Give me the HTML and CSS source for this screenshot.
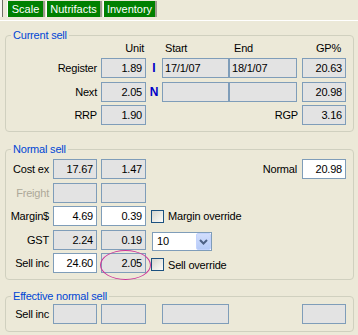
FILE: index.html
```html
<!DOCTYPE html>
<html lang="en">
<head>
<meta charset="utf-8">
<title>Sell prices</title>
<link rel="stylesheet" href="styles.css">
</head>
<body>
<div class="tabbar">
  <span class="tab-edge"></span>
  <span class="tab tab-scale">Scale</span>
  <span class="tab tab-nutri">Nutrifacts</span>
  <span class="tab tab-inv">Inventory</span>
</div>

<fieldset class="group group-current">
  <legend>Current sell</legend>
  <div class="form-grid grid-current">
    <span class="hdr c4 num-hdr">Unit</span>
    <span class="hdr c6 start-hdr">Start</span>
    <span class="hdr end-hdr">End</span>
    <span class="hdr c9 gp-hdr">GP%</span>

    <span class="lbl lbl-wide">Register</span>
    <span class="fld ro num">1.89</span>
    <span class="mark">I</span>
    <span class="fld ro date">17/1/07</span>
    <span class="fld ro date">18/1/07</span>
    <span class="fld ro num c9">20.63</span>

    <span class="lbl lbl-wide">Next</span>
    <span class="fld ro num">2.05</span>
    <span class="mark">N</span>
    <span class="fld ro date"></span>
    <span class="fld ro date"></span>
    <span class="fld ro num c9">20.98</span>

    <span class="lbl lbl-wide">RRP</span>
    <span class="fld ro num">1.90</span>
    <span class="lbl rgp">RGP</span>
    <span class="fld ro num c9">3.16</span>
  </div>
</fieldset>

<fieldset class="group group-normal">
  <legend>Normal sell</legend>
  <div class="form-grid">
    <span class="lbl">Cost ex</span>
    <span class="fld ro num">17.67</span>
    <span class="fld ro num c4">1.47</span>
    <span class="lbl mid normal-lbl">Normal</span>
    <span class="fld num c9">20.98</span>

    <span class="lbl disabled">Freight</span>
    <span class="fld ro"></span>
    <span class="fld ro c4"></span>

    <span class="lbl">Margin$</span>
    <span class="fld num">4.69</span>
    <span class="fld num c4">0.39</span>
    <label class="check mid"><span class="box"></span>Margin override</label>

    <span class="lbl">GST</span>
    <span class="fld ro num">2.24</span>
    <span class="fld ro num c4">0.19</span>
    <div class="mid combo-cell">
      <div class="combo">
        <span class="combo-val">10</span>
        <span class="combo-btn"><svg width="13" height="15" viewBox="0 0 13 15"><path d="M3 6 L6.5 9.5 L10 6" fill="none" stroke="#4d6185" stroke-width="2"/></svg></span>
      </div>
    </div>

    <span class="lbl">Sell inc</span>
    <span class="fld num">24.60</span>
    <span class="c4 ring-cell"><span class="fld ro num">2.05</span><span class="ring"></span></span>
    <label class="check mid check-low"><span class="box"></span>Sell override</label>
  </div>
</fieldset>

<fieldset class="group group-effective">
  <legend>Effective normal sell</legend>
  <div class="form-grid">
    <span class="lbl">Sell inc</span>
    <span class="fld ro"></span>
    <span class="fld ro c4"></span>
    <span class="fld ro c6"></span>
    <span class="fld ro c9"></span>
  </div>
</fieldset>
</body>
</html>
```

FILE: styles.css
```css
html, body {
  margin: 0;
  padding: 0;
  background: #ece9d8;
}
body {
  width: 358px;
  height: 335px;
  overflow: hidden;
  font-family: "Liberation Sans", Arial, sans-serif;
  font-size: 11px;
  letter-spacing: -0.2px;
  color: #000;
}

/* tab strip */
.tabbar {
  display: flex;
  align-items: flex-start;
  height: 21px;
  padding-top: 1px;
  box-sizing: border-box;
  border-bottom: 1px solid #fff;
}
.tab-edge {
  width: 2px;
  height: 17px;
  background: #f7f6f0;
  border-right: 1px solid #716f64;
  margin-right: 4px;
  margin-top: -1px;
}
.tab {
  height: 16px;
  line-height: 16px;
  background: #008000;
  color: #fff;
  text-align: center;
  letter-spacing: 0;
  border-left: 1px solid #fff;
  border-right: 2px solid #9d9b8f;
  margin-right: 1px;
}
.tab-scale { width: 35px; }
.tab-nutri { width: 53px; }
.tab-inv { width: 51px; }

/* group boxes */
.group {
  margin: 0 4px 0 5px;
  padding: 0 0 6px;
  border: 1px solid #d0d0bf;
  border-radius: 4px;
  min-width: 0;
}
.group legend {
  margin-left: 5px;
  padding: 0 2px;
  line-height: 14px;
  color: #0046d5;
}
.group-current { margin-top: 7px; }
.group-normal { margin-top: 10px; padding-top: 3px; }
.group-effective { margin-top: 9px; padding-top: 1px; padding-bottom: 7px; }

.form-grid {
  display: grid;
  grid-template-columns: 47px 44px 4px 45px 16px 67px 68px 5px 44px;
  grid-auto-rows: 20px;
  row-gap: 3.5px;
}
.grid-current {
  grid-template-rows: 12.5px;
}

.hdr {
  line-height: 12.5px;
  white-space: nowrap;
}
.num-hdr { text-align: right; padding-right: 2px; }
.start-hdr { padding-left: 3px; }
.end-hdr { padding-left: 5px; }
.gp-hdr { text-align: right; padding-right: 5px; }

.lbl {
  grid-column: 1;
  line-height: 20px;
  text-align: right;
  padding-right: 4px;
  white-space: nowrap;
}
.normal-lbl { padding-right: 5px; }
.disabled { color: #aca899; }

.mark {
  line-height: 20px;
  text-align: center;
  font-weight: bold;
  color: #0000c8;
  font-size: 12px;
  letter-spacing: 0;
}

.fld {
  display: block;
  height: 20px;
  box-sizing: border-box;
  border: 1px solid #7f9db9;
  background: #fff;
  line-height: 18px;
  padding: 0 3px;
  white-space: nowrap;
  overflow: hidden;
}
.fld.ro { background: #e3e3e3; }
.num { text-align: right; }
.date { padding-left: 2px; }

/* checkboxes */
.check {
  display: flex;
  align-items: center;
  gap: 4px;
  padding-left: 5px;
  white-space: nowrap;
}
.check-low { padding-top: 3px; }
.box {
  width: 13px;
  height: 13px;
  box-sizing: border-box;
  border: 1px solid #1c5180;
  background: linear-gradient(135deg, #d6d5ce 0%, #ecebe6 55%, #fbfbf9 100%);
}

/* combo box */
.combo {
  display: flex;
  width: 60px;
  height: 19px;
  box-sizing: border-box;
  margin: 2px 0 0 6px;
  border: 1px solid #7f9db9;
  background: #fff;
}
.combo-val {
  flex: 1;
  padding-left: 4px;
  line-height: 17px;
}
.combo-btn {
  width: 15px;
  box-sizing: border-box;
  border: 1px solid #c3d3fd;
  border-radius: 2px;
  background: linear-gradient(#d2defc, #b6cbf8);
  display: flex;
  align-items: center;
  justify-content: center;
}
.combo-btn svg { display: block; }

/* annotation ring */
.ring-cell { position: relative; }
.ring {
  position: absolute;
  left: -1px;
  top: -3px;
  width: 51px;
  height: 30px;
  box-sizing: border-box;
  border: 1px solid #cc3399;
  border-radius: 50%;
}

/* grid placement */
.c4 { grid-column: 4; }
.c6 { grid-column: 6; }
.c9 { grid-column: 9; }
.mid { grid-column: 5 / 9; }
.lbl-wide { grid-column: 1 / 4; }
.rgp { grid-column: 6 / 9; }
```
